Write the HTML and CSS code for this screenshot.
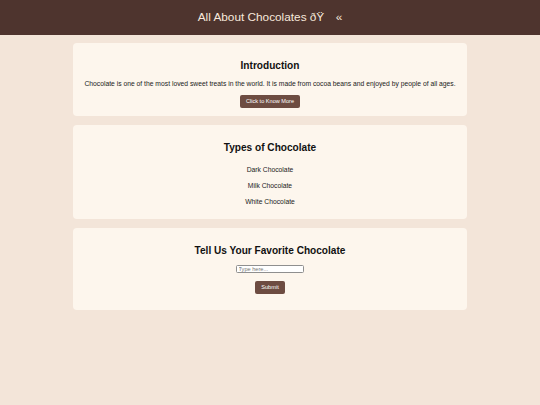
FILE: index.html
```html
<!DOCTYPE html>
<html>
<head>
<meta charset="utf-8">
<title>All About Chocolates</title>
<link rel="stylesheet" href="styles.css">
</head>
<body>
<header class="site-header">
  <h1 class="site-title">All About Chocolates ðŸ&#x8D;<span class="title-tail">«</span></h1>
</header>
<main class="content">
  <section class="card">
    <h2 class="card-title">Introduction</h2>
    <p class="card-text">Chocolate is one of the most loved sweet treats in the world. It is made from cocoa beans and enjoyed by people of all ages.</p>
    <button class="btn">Click to Know More</button>
  </section>
  <section class="card">
    <h2 class="card-title">Types of Chocolate</h2>
    <ul class="types">
      <li class="type">Dark Chocolate</li>
      <li class="type">Milk Chocolate</li>
      <li class="type">White Chocolate</li>
    </ul>
  </section>
  <section class="card">
    <h2 class="card-title">Tell Us Your Favorite Chocolate</h2>
    <form class="fav-form">
      <input class="fav-input" type="text" placeholder="Type here...">
      <button class="btn btn-submit" type="button">Submit</button>
    </form>
  </section>
</main>
</body>
</html>
```

FILE: styles.css
```css
html, body {
  margin: 0;
  padding: 0;
}
body {
  background: #f3e5d9;
  font-family: "Liberation Sans", Arial, sans-serif;
  color: #222;
}
.site-header {
  background: #4e342e;
  height: 35px;
  display: flex;
  align-items: center;
  justify-content: center;
}
.site-title {
  margin: 0;
  font-size: 11.8px;
  font-weight: normal;
  color: #f7e9dc;
}
.title-tail {
  margin-left: 1.5px;
}
.content {
  width: 394px;
  margin: 8px auto 0;
  display: flex;
  flex-direction: column;
  gap: 9px;
}
.card {
  background: #fdf6ed;
  border-radius: 4px;
  padding: 8.4px;
  text-align: center;
  font-size: 6.75px;
  line-height: 1;
}
.card-title {
  font-size: 10.1px;
  line-height: 1.15;
  font-weight: bold;
  margin: 8.4px 0;
  color: #111;
}
.card-text {
  font-size: 6.75px;
  line-height: 1.15;
  margin: 6.75px 0 7.4px;
}
.btn {
  font-family: "Liberation Sans", Arial, sans-serif;
  font-size: 5.6px;
  line-height: 1.15;
  background: #6d4c41;
  color: #fff;
  border: none;
  border-radius: 2px;
  padding: 3px 6.4px;
  height: 12.6px;
  cursor: pointer;
  vertical-align: top;
}
.types {
  list-style: none;
  margin: 0;
  padding: 0;
}
.type {
  font-size: 6.75px;
  line-height: 1.15;
  padding: 4.25px 0;
}
.fav-form {
  margin: 0 0 8px;
  display: flex;
  flex-direction: column;
  align-items: center;
}
.fav-input {
  width: 68px;
  height: 8.4px;
  box-sizing: border-box;
  font-family: "Liberation Sans", Arial, sans-serif;
  font-size: 5.6px;
  border: 1px solid #8f8f8f;
  border-radius: 1.5px;
  padding: 0 1.5px;
  background: #fff;
}
.fav-input::placeholder {
  color: #757575;
}
.btn-submit {
  margin-top: 7.6px;
  width: 30.6px;
  height: 13px;
  padding: 0;
}
```
